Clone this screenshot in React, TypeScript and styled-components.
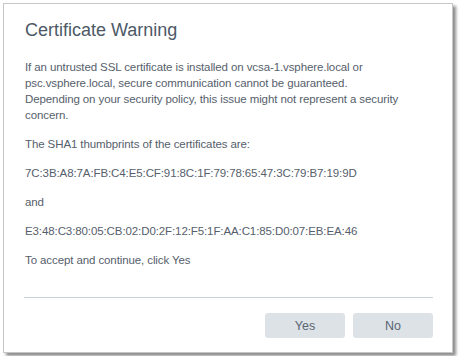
import styled, { createGlobalStyle } from "styled-components";

const Global = createGlobalStyle`
  body {
    margin: 0;
    background: #ffffff;
    font-family: "Liberation Sans", Arial, sans-serif;
  }
`;

export default function App() {
  return (
    <>
      <Global />
      <Dialog>
        <Title>Certificate Warning</Title>
        <Body>
          <Para>
            If an untrusted SSL certificate is installed on vcsa-1.vsphere.local or
            psc.vsphere.local, secure communication cannot be guaranteed.
            Depending on your security policy, this issue might not represent a
            security concern.
          </Para>
          <Para>The SHA1 thumbprints of the certificates are:</Para>
          <Para>7C:3B:A8:7A:FB:C4:E5:CF:91:8C:1F:79:78:65:47:3C:79:B7:19:9D</Para>
          <Para>and</Para>
          <Para>E3:48:C3:80:05:CB:02:D0:2F:12:F5:1F:AA:C1:85:D0:07:EB:EA:46</Para>
          <Para>To accept and continue, click Yes</Para>
        </Body>
        <Footer>
          <Button>Yes</Button>
          <Button>No</Button>
        </Footer>
      </Dialog>
    </>
  );
}

const Dialog = styled("div")`
  margin: 3px;
  width: 450px;
  height: 350px;
  box-sizing: border-box;
  border: 1px solid #c6c6c6;
  background: #ffffff;
  box-shadow: 3px 3px 3px rgba(0, 0, 0, 0.45);
  display: flex;
  flex-direction: column;
`;

const Title = styled("h1")`
  margin: 0;
  padding: 12px 20px 0 21px;
  font-size: 18px;
  line-height: 28px;
  font-weight: normal;
  color: #4d5966;
`;

const Body = styled("div")`
  padding: 15px 20px 0 21px;
`;

const Para = styled("p")`
  margin: 0 0 13px;
  font-size: 11.5px;
  letter-spacing: -0.1px;
  line-height: 16px;
  color: #56606c;
  width: 380px;
`;

const Footer = styled("div")`
  margin: auto 19px 0 20px;
  border-top: 1px solid #c9d1d8;
  padding: 15px 0 14px;
  display: flex;
  justify-content: flex-end;
  gap: 8px;
`;

const Button = styled("button")`
  width: 80px;
  height: 25px;
  border: none;
  border-radius: 3px;
  background: #dde2e7;
  color: #5a6673;
  font-family: "Liberation Sans", Arial, sans-serif;
  font-size: 12.5px;
  padding: 0;
`;
